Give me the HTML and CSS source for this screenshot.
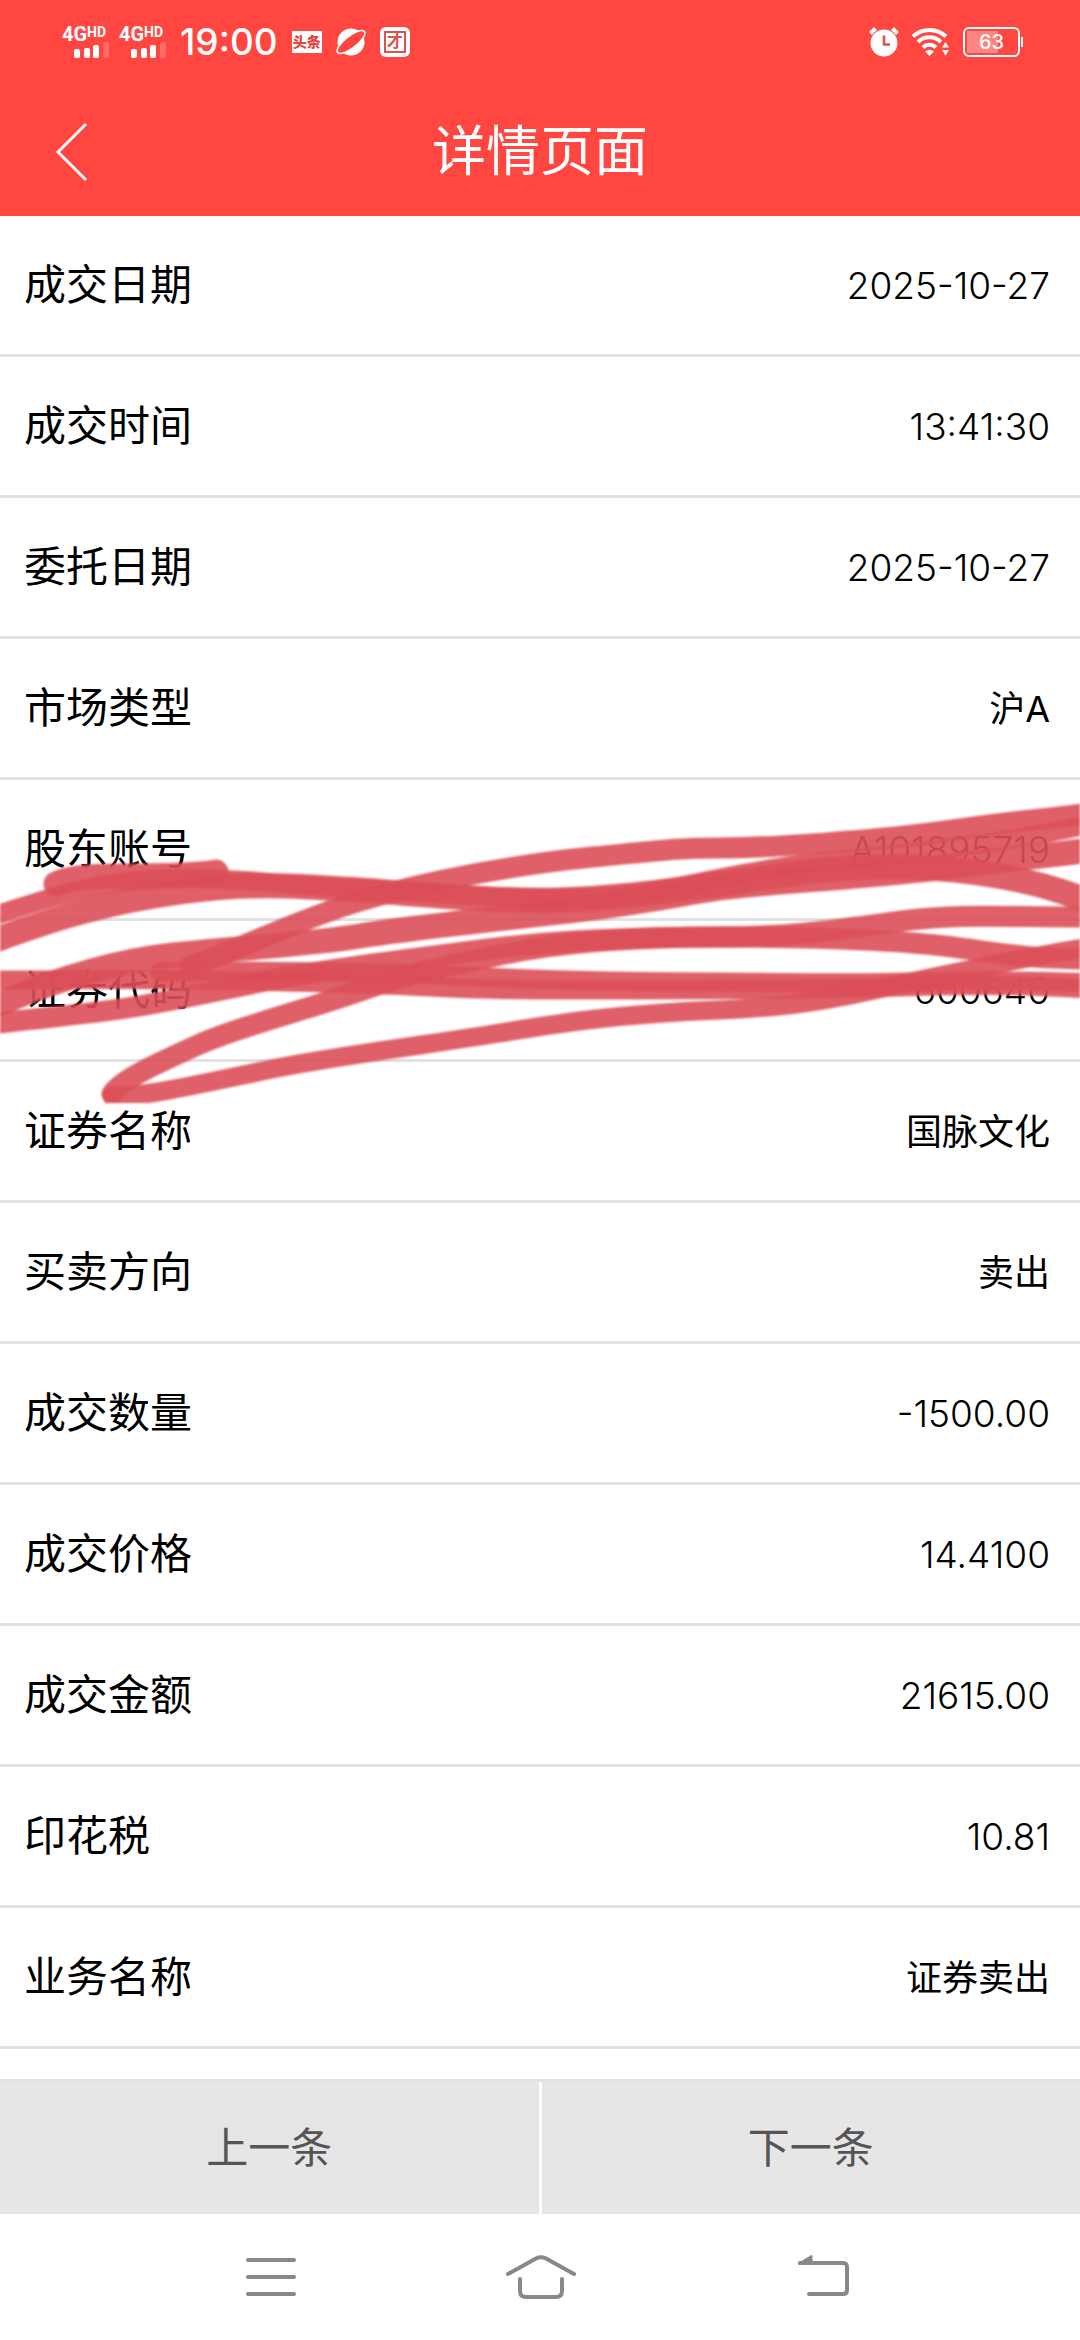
FILE: index.html
```html
<!DOCTYPE html>
<html lang="zh-CN">
<head>
    <meta charset="UTF-8">
    <meta name="viewport" content="width=device-width, initial-scale=1.0">
    <title>详情页面</title>
    <link rel="stylesheet" href="styles.css">
</head>
<body>
    <!-- 状态栏 -->
    <div class="status">
        <div class="status-left">
            <div class="signal">
                <div class="net">4G<span class="hd">HD</span></div>
                <svg class="bars" viewBox="0 0 36 16"><rect x="0" y="7" width="6" height="9" rx="2"/><rect x="10" y="6" width="6" height="10" rx="2"/><rect x="19" y="3" width="6" height="13" rx="2"/><rect x="29" y="0" width="6" height="16" rx="2" opacity=".2"/></svg>
            </div>
            <div class="signal">
                <div class="net">4G<span class="hd">HD</span></div>
                <svg class="bars" viewBox="0 0 36 16"><rect x="0" y="7" width="6" height="9" rx="2"/><rect x="10" y="6" width="6" height="10" rx="2"/><rect x="19" y="3" width="6" height="13" rx="2"/><rect x="29" y="0" width="6" height="16" rx="2" opacity=".2"/></svg>
            </div>
            <span class="clock">19:00</span>
            <span class="toutiao">头条</span>
            <svg class="icon" viewBox="0 0 30 30">
                <circle cx="15" cy="15" r="13.5" fill="#fff"/>
                <ellipse cx="15" cy="15" rx="17" ry="6" transform="rotate(-38 15 15)" fill="#ff4641" stroke="#fff" stroke-width="1.6"/>
            </svg>
            <span class="tuan"><span class="tuan-in">才</span></span>
        </div>
        <div class="status-right">
            <svg class="icon" viewBox="0 0 30 30">
                <circle cx="15" cy="16" r="13.5" fill="#fff"/>
                <path d="M1.500 6.500l5-5M28.500 6.500l-5-5" stroke="#fff" stroke-width="4"/>
                <path d="M15 8.500v9h6" fill="none" stroke="#d9534f" stroke-width="2.600"/>
            </svg>
            <svg class="wifi" viewBox="0 0 40 30">
                <g fill="none" stroke="#fff" stroke-width="4">
                    <path d="M2 9.500a24 24 0 0 1 33 0"/>
                    <path d="M7 15a16.500 16.500 0 0 1 23 0"/>
                    <path d="M12 20.500a9 9 0 0 1 13 0"/>
                </g>
                <path d="M18.500 29l-4.500-4.500q4.500-3.500 9 0zM31 20.500l3.500-5.500 3.500 5.500zM31 23l3.500 5.500 3.500-5.500z" fill="#fff"/>
            </svg>
            <span class="battery"><span class="level">63</span></span>
        </div>
    </div>

    <!-- 标题栏 -->
    <header class="header">
        <button class="back" type="button" aria-label="返回">
            <svg viewBox="0 0 32 60"><path d="M30 2L2 30l28 28" fill="none" stroke="#fff" stroke-width="3"/></svg>
        </button>
        <h1>详情页面</h1>
    </header>

    <!-- 成交详情 -->
    <main class="detail">
        <dl class="list">
            <div class="row"><dt>成交日期</dt><dd class="num">2025-10-27</dd></div>
            <div class="row"><dt>成交时间</dt><dd class="num">13:41:30</dd></div>
            <div class="row"><dt>委托日期</dt><dd class="num">2025-10-27</dd></div>
            <div class="row"><dt>市场类型</dt><dd>沪A</dd></div>
            <div class="row"><dt>股东账号</dt><dd class="num">A101895719</dd></div>
            <div class="row"><dt>证券代码</dt><dd class="num">600640</dd></div>
            <div class="row"><dt>证券名称</dt><dd>国脉文化</dd></div>
            <div class="row"><dt>买卖方向</dt><dd>卖出</dd></div>
            <div class="row"><dt>成交数量</dt><dd class="num">-1500.00</dd></div>
            <div class="row"><dt>成交价格</dt><dd class="num">14.4100</dd></div>
            <div class="row"><dt>成交金额</dt><dd class="num">21615.00</dd></div>
            <div class="row"><dt>印花税</dt><dd class="num">10.81</dd></div>
            <div class="row"><dt>业务名称</dt><dd>证券卖出</dd></div>
        </dl>

        <!-- 涂抹笔迹 -->
        <svg class="scribble" viewBox="0 800 1080 303" preserveAspectRatio="none" aria-hidden="true">
            <path class="thick" d="M56 884C72 876 100 876 130 876S190 876 216 872"/>
            <path d="M-10 917C50 898 90 882 160 879S280 885 360 889S480 898 560 898S660 890 720 878S800 864 853 859S1020 841 1090 824"/>
            <path class="thick" d="M-10 942C60 916 110 902 180 892S300 886 360 890S500 902 560 900S660 892 720 884S810 869 870 867S1020 872 1090 902"/>
            <path class="thick" d="M-10 1008C40 985 100 966 150 958S300 946 360 936S540 915 600 907S680 894 720 888S880 876 953 866S1040 857 1090 850"/>
            <path class="mid" d="M190 966C240 950 290 922 360 901S520 864 593 857S680 848 720 848S880 841 953 830S1040 820 1090 813"/>
            <path d="M-10 980C60 980 120 979 180 980S300 982 360 984S470 990 540 990S800 990 900 987S1040 986 1090 989"/>
            <path d="M160 972C260 970 380 972 460 976S640 982 720 982S840 984 910 982S1040 981 1090 983"/>
            <path class="mid" d="M-10 1024C40 1018 90 1014 133 1007S220 990 270 980S420 958 480 950S620 937 720 937S900 940 953 947S1030 959 1090 959"/>
            <path class="mid" d="M112 1094C120 1080 160 1062 200 1044S300 1012 360 991S440 968 500 955S640 937 720 937S860 926 910 920S1000 917 1090 917"/>
            <path d="M112 1096C140 1098 200 1084 267 1070S420 1046 493 1034S620 1014 720 1010S860 992 920 980S1020 958 1090 947"/>
        </svg>
    </main>

    <footer class="pager">
        <button type="button">上一条</button>
        <button type="button">下一条</button>
    </footer>

    <!-- 系统导航 -->
    <nav class="nav">
        <button type="button" aria-label="菜单">
            <svg viewBox="0 0 72 72"><path d="M20 19h46M20 36h46M20 53h46"/></svg>
        </button>
        <button type="button" aria-label="主页">
            <svg viewBox="0 0 72 72"><path d="M4 33L32 17.500q5-2.500 10 0L70 33M16 38v12q0 6 6 6h30q6 0 6-6V38"/></svg>
        </button>
        <button type="button" aria-label="返回上级">
            <svg viewBox="0 0 72 72"><path d="M20 22h43q4 0 4 4v23q0 4-4 4H29"/><path class="fill" d="M19 22.500L31.500 15v7.500z"/></svg>
        </button>
    </nav>
</body>
</html>
```
FILE: styles.css
```css
* {
    margin: 0;
    padding: 0;
    box-sizing: border-box;
}

body {
    min-height: 100vh;
    display: flex;
    flex-direction: column;
    background-color: #fff;
    color: #000;
    font-family: Inter, "Noto Sans CJK SC", sans-serif;
}

button {
    border: none;
    background: none;
    font-family: inherit;
}

svg {
    display: block;
}

/* 状态栏 */
.status {
    height: 84px;
    padding: 0 60px 0 62px;
    display: flex;
    justify-content: space-between;
    align-items: center;
    background-color: #ff4641;
    color: #fff;
}

.status-left,
.status-right {
    display: flex;
    align-items: center;
}

.status-left {
    gap: 14px;
}

.status-right {
    gap: 12px;
}

.signal {
    width: 48px;
    margin-right: -5px;
}

.net {
    display: flex;
    align-items: flex-start;
    height: 16px;
    font: bold 20px/16px Roboto, sans-serif;
}

.hd {
    font-size: 14px;
    line-height: 12px;
}

.bars {
    width: 36px;
    height: 16px;
    margin-left: 12px;
    fill: #fff;
}

.clock {
    margin-left: 4px;
    font-size: 37px;
    line-height: 40px;
    font-weight: 500;
}

.toutiao {
    width: 30px;
    height: 22px;
    background-color: #fff;
    color: #e0433f;
    font-size: 14px;
    font-weight: 900;
    line-height: 21px;
    text-align: center;
}

.icon {
    width: 30px;
    height: 30px;
    overflow: visible;
}

.tuan {
    width: 30px;
    height: 30px;
    padding: 4px;
    border-radius: 6px;
    background-color: #fff;
}

.tuan-in {
    display: block;
    height: 22px;
    border: 2px solid #d9534f;
    color: #d9534f;
    font-size: 16px;
    font-weight: bold;
    line-height: 17px;
    text-align: center;
}

.wifi {
    width: 40px;
    height: 30px;
}

.battery {
    position: relative;
    width: 57px;
    height: 30px;
    padding: 2px;
    border: 2px solid #fff;
    border-radius: 6px;
}

.battery::after {
    content: "";
    position: absolute;
    top: 8px;
    right: -5px;
    width: 2px;
    height: 10px;
    background-color: #fff;
}

.level {
    display: block;
    height: 22px;
    background: linear-gradient(to right, #ff8583 63%, transparent 63%);
    font-size: 20px;
    font-weight: 500;
    line-height: 22px;
    text-align: center;
}

/* 标题栏 */
.header {
    height: 132px;
    padding: 4px 56px 0;
    display: grid;
    grid-template-columns: 1fr auto 1fr;
    align-items: center;
    background-color: #ff4641;
    color: #fff;
}

.header h1 {
    font-size: 54px;
    font-weight: normal;
    line-height: 64px;
}

.back {
    justify-self: start;
}

.back svg {
    width: 32px;
    height: 60px;
}

/* 详情列表 */
.detail {
    flex: 1;
    position: relative;
}

.row {
    height: 141px;
    padding: 0 30px 0 24px;
    display: flex;
    justify-content: space-between;
    align-items: center;
    border-bottom: 3px solid #e2e2e2;
}

.row dt {
    padding-bottom: 8px;
    font-size: 42px;
}

.row dd {
    padding-bottom: 4px;
    font-size: 36px;
}

.row .num {
    padding-bottom: 0;
    font-size: 37px;
    font-weight: 300;
}

.scribble {
    position: absolute;
    top: 584px;
    left: 0;
    width: 100%;
    height: 303px;
    fill: none;
    stroke: #dc4f58;
    stroke-width: 19px;
    stroke-opacity: .9;
    stroke-linecap: round;
    filter: blur(1px);
    pointer-events: none;
}

.scribble .mid {
    stroke-width: 21px;
}

.scribble .thick {
    stroke-width: 25px;
}

/* 上一条 / 下一条 */
.pager {
    display: flex;
    border-top: 3px solid #e2e2e2;
}

.pager button {
    flex: 1;
    height: 132px;
    padding-bottom: 8px;
    background-color: #e6e6e6;
    color: #555;
    font-size: 42px;
}

.pager button:first-child {
    border-right: 3px solid #fff;
}

/* 系统导航 */
.nav {
    height: 126px;
    display: flex;
    justify-content: center;
    align-items: center;
    gap: 204px;
}

.nav svg {
    width: 72px;
    height: 72px;
    fill: none;
    stroke: #888;
    stroke-width: 4px;
    stroke-linecap: round;
    stroke-linejoin: round;
}

.nav .fill {
    fill: #888;
    stroke-width: 2px;
}
```
